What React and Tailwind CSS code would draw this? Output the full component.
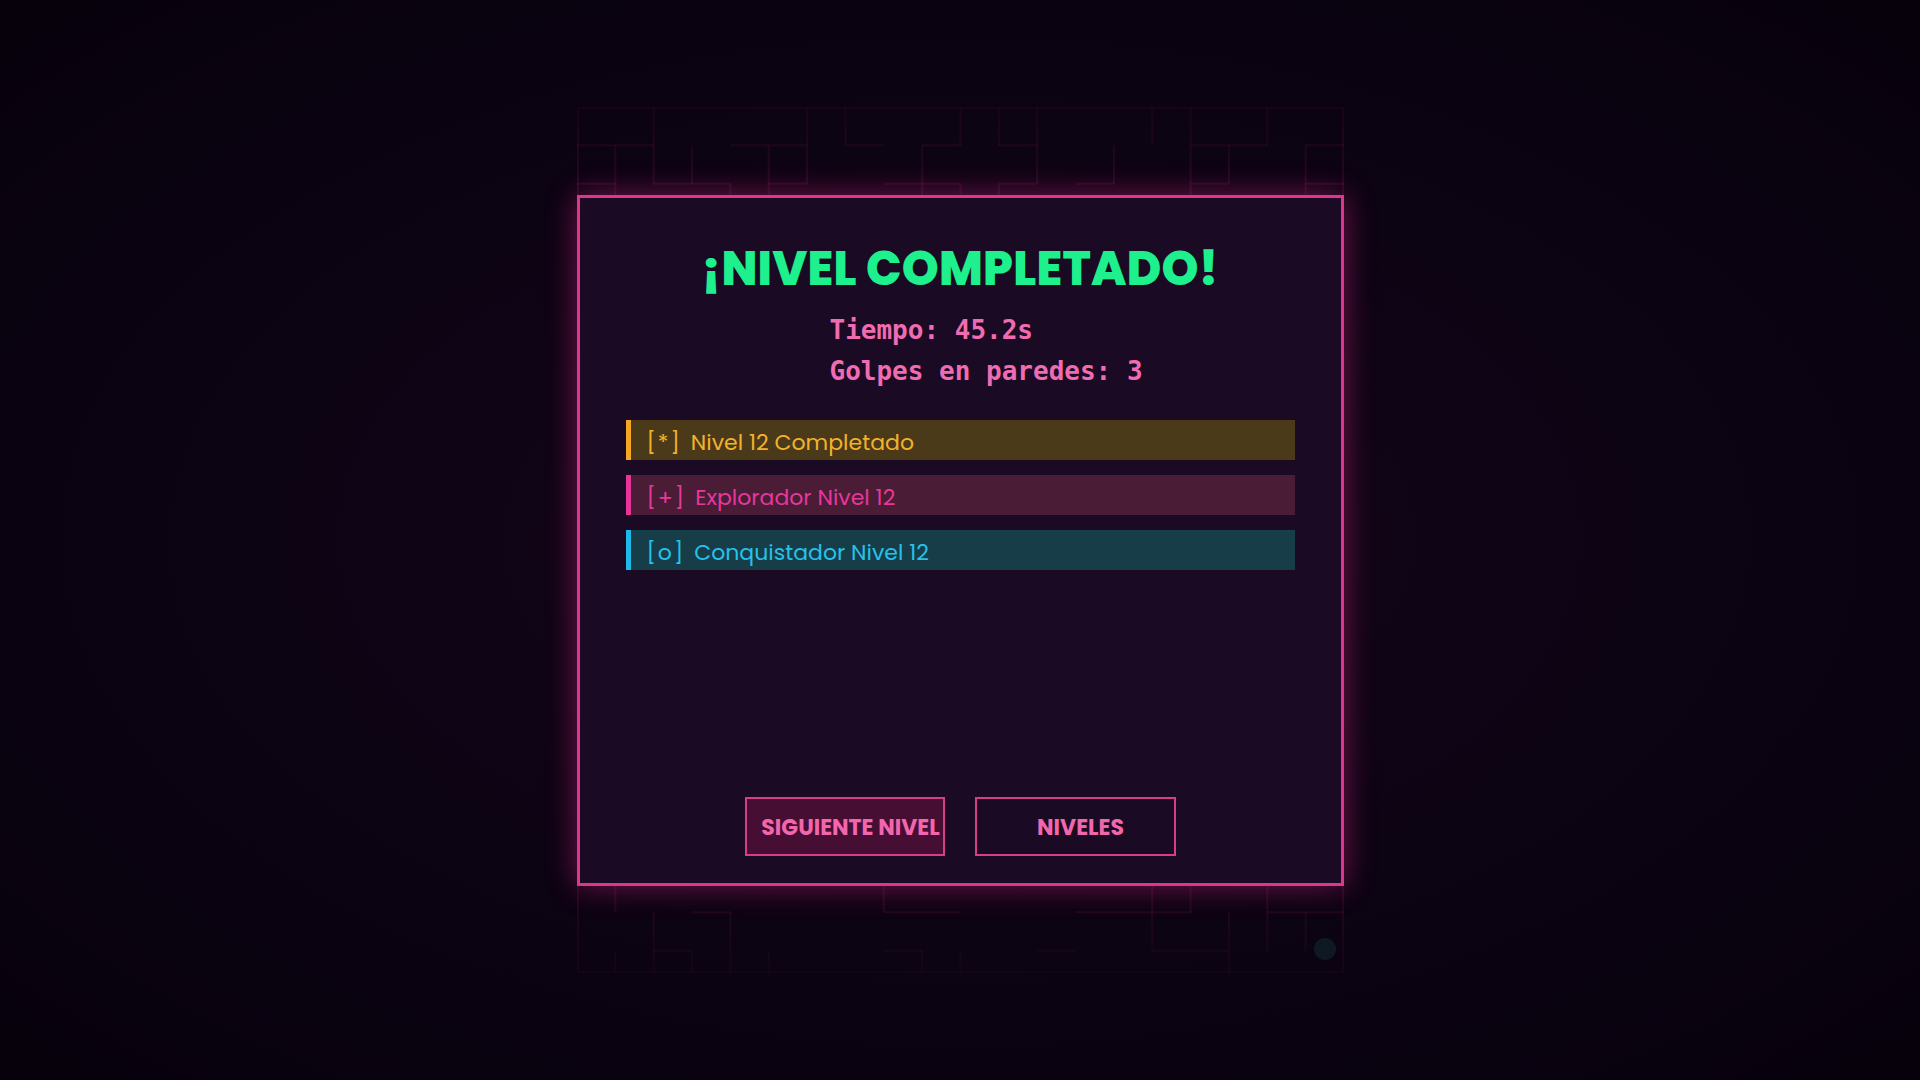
import { useMemo } from 'react';

const CELL = 38.35;
const COLS = 20;
const ROWS = 23;

function buildMaze() {
  let seed = 1234567;
  const rnd = () => {
    seed = (seed * 16807) % 2147483647;
    return seed / 2147483647;
  };
  const segs = [];
  for (let r = 0; r < ROWS; r++) {
    for (let c = 0; c < COLS; c++) {
      if (c < COLS - 1 && rnd() < 0.5) {
        segs.push({ x1: (c + 1) * CELL, y1: r * CELL, x2: (c + 1) * CELL, y2: (r + 1) * CELL });
      }
      if (rnd() < 0.42) {
        segs.push({ x1: c * CELL, y1: (r + 1) * CELL, x2: (c + 1) * CELL, y2: (r + 1) * CELL });
      }
    }
  }
  return segs;
}

function MazeBackdrop() {
  const segs = useMemo(buildMaze, []);
  return (
    <svg className="absolute inset-0" width="767" height="866" viewBox="0 0 767 866">
      <defs>
        <linearGradient id="fade" gradientUnits="userSpaceOnUse" x1="0" y1="0" x2="0" y2="866">
          <stop offset="0" stopColor="#ff2e97" stopOpacity="0.04" />
          <stop offset="0.1" stopColor="#ff2e97" stopOpacity="0.11" />
          <stop offset="0.5" stopColor="#ff2e97" stopOpacity="0.1" />
          <stop offset="0.9" stopColor="#ff2e97" stopOpacity="0.1" />
          <stop offset="1" stopColor="#ff2e97" stopOpacity="0.03" />
        </linearGradient>
      </defs>
      <g stroke="url(#fade)" strokeWidth="2" fill="none">
        <rect x="1" y="1" width="765" height="864" />
        {segs.map((s, i) => (
          <line key={i} x1={s.x1} y1={s.y1} x2={s.x2} y2={s.y2} />
        ))}
      </g>
      <circle cx="748" cy="842" r="11" fill="#1f8f7a" opacity="0.16" />
    </svg>
  );
}

const achievements = [
  {
    tag: '[*]',
    label: 'Nivel 12 Completado',
    box: 'bg-[#4a3a1a] border-[#f5a623] text-[#f3b12c]',
  },
  {
    tag: '[+]',
    label: 'Explorador Nivel 12',
    box: 'bg-[#4a1c36] border-[#e8339a] text-[#e6379b]',
  },
  {
    tag: '[o]',
    label: 'Conquistador Nivel 12',
    box: 'bg-[#173d48] border-[#1fb9e9] text-[#27c1e9]',
  },
];

export default function App() {
  return (
    <div className="w-full h-screen flex items-center justify-center bg-[radial-gradient(ellipse_at_center,#150619_0%,#0c0313_55%,#07010c_100%)] overflow-hidden">
      <div className="relative w-[767px] h-[866px] flex items-center justify-center">
        <MazeBackdrop />

        <div className="relative w-[767px] h-[691px] border-[3px] border-[#e0358c] bg-[#1b0a23] shadow-[0_0_28px_rgba(236,40,140,0.45)] flex flex-col px-[46px] pt-[41px] pb-[27px]">
          <h1 className="text-center text-[#1df08c] text-[47px] leading-[60px] font-extrabold tracking-[0.2px] font-['Poppins','Inter',sans-serif]">
            ¡NIVEL COMPLETADO!
          </h1>

          <div className="mt-[11px] ml-[204px] font-['DejaVu_Sans_Mono',monospace] font-bold text-[26px] leading-[41px] text-[#f06cb2]">
            <p>Tiempo: 45.2s</p>
            <p>Golpes en paredes: 3</p>
          </div>

          <div className="mt-[28px] flex flex-col gap-[15px]">
            {achievements.map((a) => (
              <div
                key={a.label}
                className={`h-[40px] border-l-[5px] flex items-center pl-[16px] pt-[6px] text-[22px] font-['Poppins','Inter',sans-serif] ${a.box}`}
              >
                <span className="mr-[9px] tracking-[2px]">{a.tag}</span>
                <span>{a.label}</span>
              </div>
            ))}
          </div>

          <div className="mt-auto flex justify-center gap-[30px]">
            <button className="w-[200px] h-[59px] border-2 border-[#d83d8a] bg-[#470e33] text-[#f266ad] text-[22px] font-bold font-['Poppins','Inter',sans-serif] pl-[12px] pt-[3px] whitespace-nowrap">
              SIGUIENTE NIVEL
            </button>
            <button className="w-[201px] h-[59px] border-2 border-[#d83d8a] bg-transparent text-[#f266ad] text-[22px] font-bold font-['Poppins','Inter',sans-serif] pl-[11px] pt-[3px]">
              NIVELES
            </button>
          </div>
        </div>
      </div>
    </div>
  );
}
